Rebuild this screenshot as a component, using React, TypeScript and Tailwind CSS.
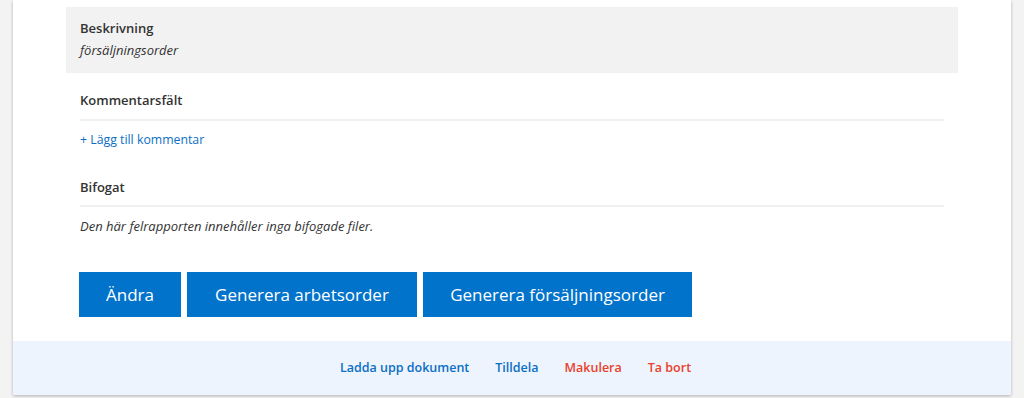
import React from "react";

export default function App() {
  return (
    <div
      className="w-[1024px] h-[398px] bg-[#f3f3f3] overflow-hidden"
      style={{ fontFamily: '"Open Sans", "Liberation Sans", sans-serif' }}
    >
      <div className="ml-[13px] w-[998px] h-[395px] bg-white shadow-[0_1px_3px_rgba(0,0,0,0.28)] flex flex-col">
        <div className="px-[53px] pt-[7px] flex-1">
          <div className="bg-[#f2f2f2] px-[14px] pt-[10px] pb-[12px]">
            <div className="text-[13px] leading-[22px] font-semibold text-[#333333]">Beskrivning</div>
            <div className="text-[13px] leading-[22px] italic text-[#333333]">försäljningsorder</div>
          </div>
          <div className="px-[14px]">
            <div className="mt-[17px] text-[13px] leading-[20px] font-semibold text-[#333333] pb-[9px] border-b-2 border-[#f0f0f0]">
              Kommentarsfält
            </div>
            <div className="mt-[9px] text-[12.3px] leading-[20px] text-[#0b6fc4]">+ Lägg till kommentar</div>
            <div className="mt-[27px] text-[13px] leading-[20px] font-semibold text-[#333333] pb-[8px] border-b-2 border-[#f0f0f0]">
              Bifogat
            </div>
            <div className="mt-[9px] text-[13px] leading-[20px] italic text-[#333333]">
              Den här felrapporten innehåller inga bifogade filer.
            </div>
          </div>
          <div className="mt-[36px] flex gap-[6px] pl-[13px]">
            <button className="h-[45px] w-[102px] bg-[#0273cb] text-white text-[17px]">Ändra</button>
            <button className="h-[45px] w-[230px] bg-[#0273cb] text-white text-[17px]">Generera arbetsorder</button>
            <button className="h-[45px] w-[269px] bg-[#0273cb] text-white text-[17px]">Generera försäljningsorder</button>
          </div>
        </div>
        <div className="h-[54px] bg-[#edf4fd] flex items-center justify-center gap-[26px] pl-[7px] text-[12.5px] font-semibold">
          <span className="text-[#0b6fc4]">Ladda upp dokument</span>
          <span className="text-[#0b6fc4]">Tilldela</span>
          <span className="text-[#e8412c]">Makulera</span>
          <span className="text-[#e8412c]">Ta bort</span>
        </div>
      </div>
    </div>
  );
}
